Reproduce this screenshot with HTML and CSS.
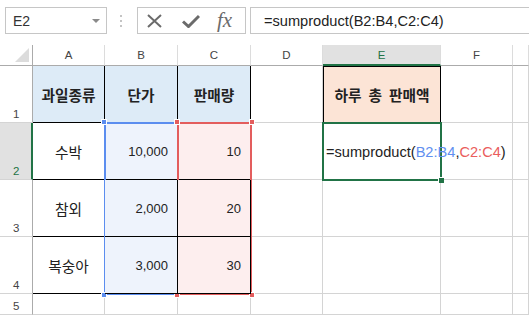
FILE: index.html
```html
<!DOCTYPE html>
<html lang="ko">
<head>
  <meta charset="UTF-8">
  <title>sumproduct</title>
  <link rel="stylesheet" href="styles.css">
</head>
<body>
  <div class="fbar">
    <div class="namebox"><span>E2</span><span class="caret"></span></div>
    <div class="grip"><i></i><i></i><i></i></div>
    <div class="fbtns">
      <svg class="ic-x" width="15" height="14" viewBox="0 0 15 14"><path d="M1 1L14 13M14 1L1 13" stroke="#6b6b6b" stroke-width="2" fill="none"/></svg>
      <svg class="ic-ok" width="18" height="14" viewBox="0 0 18 14"><path d="M1 7.5L6.5 12.5L17 2" stroke="#6b6b6b" stroke-width="3" fill="none"/></svg>
      <span class="fx">fx</span>
    </div>
    <div class="finput">=sumproduct(B2:B4,C2:C4)</div>
  </div>

  <div class="sheet">
    <div class="corner"></div>
    <div class="ch">A</div>
    <div class="ch">B</div>
    <div class="ch">C</div>
    <div class="ch">D</div>
    <div class="ch sel">E</div>
    <div class="ch">F</div>
    <div class="ch"></div>

    <div class="rh">1</div>
    <div class="cell hd">과일종류</div>
    <div class="cell hd">단가</div>
    <div class="cell hd">판매량</div>
    <div class="cell"></div>
    <div class="cell total">하루 총 판매액</div>
    <div class="cell"></div>
    <div class="cell"></div>

    <div class="rh sel">2</div>
    <div class="cell tb">수박</div>
    <div class="cell tb num fb">10,000
      <div class="range blue"><i class="h tl"></i><i class="h bl"></i></div>
    </div>
    <div class="cell tb num fc">10
      <div class="range red"><i class="h tl"></i><i class="h tr"></i><i class="h bl"></i><i class="h br"></i></div>
    </div>
    <div class="cell"></div>
    <div class="cell active">=sumproduct(<span class="rb">B2:B4</span>,<span class="rc">C2:C4</span>)<span class="cursor"></span></div>
    <div class="cell"></div>
    <div class="cell"></div>

    <div class="rh">3</div>
    <div class="cell tb">참외</div>
    <div class="cell tb num fb">2,000</div>
    <div class="cell tb num fc">20</div>
    <div class="cell"></div>
    <div class="cell"></div>
    <div class="cell"></div>
    <div class="cell"></div>

    <div class="rh">4</div>
    <div class="cell tb">복숭아</div>
    <div class="cell tb num fb">3,000</div>
    <div class="cell tb num fc">30</div>
    <div class="cell"></div>
    <div class="cell"></div>
    <div class="cell"></div>
    <div class="cell"></div>

    <div class="rh">5</div>
    <div class="cell"></div>
    <div class="cell"></div>
    <div class="cell"></div>
    <div class="cell"></div>
    <div class="cell"></div>
    <div class="cell"></div>
    <div class="cell"></div>
  </div>
</body>
</html>
```

FILE: styles.css
```css
body {
  margin: 0;
  width: 529px;
  height: 315px;
  overflow: hidden;
  background-color: #fff;
  color: #222;
  font-family: "Liberation Sans", "Noto Sans CJK KR", sans-serif;
}

/* formula bar */
.fbar {
  display: flex;
  align-items: center;
  height: 45px;
  padding: 7px 0 11px 5px;
  box-sizing: border-box;
}
.namebox {
  width: 102px;
  height: 27px;
  box-sizing: border-box;
  border: 1px solid #c6c6c6;
  display: flex;
  align-items: center;
  justify-content: space-between;
  padding: 0 6px 0 7px;
  font-size: 14px;
  color: #333;
}
.caret {
  border-left: 4px solid transparent;
  border-right: 4px solid transparent;
  border-top: 4px solid #8a8a8a;
}
.grip {
  display: flex;
  flex-direction: column;
  gap: 3px;
  margin: 0 15px 0 13px;
}
.grip i {
  width: 2px;
  height: 2px;
  background-color: #c4c4c4;
}
.fbtns {
  width: 109px;
  height: 27px;
  box-sizing: border-box;
  border: 1px solid #c6c6c6;
  display: flex;
  align-items: center;
  padding-left: 9px;
}
.ic-ok {
  margin-left: 20px;
}
.fx {
  margin-left: 17px;
  font-family: "Liberation Serif", serif;
  font-style: italic;
  font-size: 21px;
  color: #6b6b6b;
  line-height: 1;
}
.finput {
  flex: 1;
  height: 27px;
  box-sizing: border-box;
  margin-left: 4px;
  border: 1px solid #c6c6c6;
  border-right: none;
  display: flex;
  align-items: center;
  padding-left: 13px;
  font-size: 14.6px;
  color: #222;
}

/* sheet */
.sheet {
  display: grid;
  grid-template-columns: 33px 72px 73px 73px 72px 118px 72px 1fr;
  grid-template-rows: 21px repeat(4, 57px) 21px;
}
.corner {
  box-sizing: border-box;
  border-right: 1px solid #ababab;
  border-bottom: 1px solid #ababab;
  display: flex;
  justify-content: flex-end;
  align-items: flex-end;
  padding: 0 3px 3px 0;
}
.corner::after {
  content: "";
  border-left: 14px solid transparent;
  border-bottom: 14px solid #dcdcdc;
}
.ch {
  box-sizing: border-box;
  border-right: 1px solid #dcdcdc;
  border-bottom: 1px solid #ababab;
  display: flex;
  align-items: center;
  justify-content: center;
  font-size: 11.5px;
  color: #444;
}
.ch.sel {
  background-color: #e1e1e1;
  color: #217346;
  border-bottom: 2px solid #217346;
}
.rh {
  box-sizing: border-box;
  border-right: 1px solid #ababab;
  border-bottom: 1px solid #d4d4d4;
  display: flex;
  align-items: flex-end;
  padding: 0 0 2px 13px;
  font-size: 11.5px;
  color: #444;
}
.rh.sel {
  background-color: #e1e1e1;
  color: #217346;
  border-right: 2px solid #217346;
}
.cell {
  box-sizing: border-box;
  border-right: 1px solid #d4d4d4;
  border-bottom: 1px solid #d4d4d4;
  display: flex;
  align-items: center;
  justify-content: center;
  font-size: 14.7px;
  white-space: nowrap;
  min-width: 0;
}
.hd {
  background-color: #ddebf7;
  border-right-color: #000;
  border-bottom-color: #000;
  font-weight: bold;
}
.total {
  background-color: #fce4d6;
  border: 1px solid #000;
  font-weight: bold;
  word-spacing: 3px;
}
.tb {
  border-right-color: #000;
  border-bottom-color: #000;
}
.num {
  justify-content: flex-end;
  padding-right: 9px;
  font-size: 13px;
  position: relative;
}
.fb {
  background-color: #eef3fc;
}
.fc {
  background-color: #fdeeee;
}

/* reference ranges drawn over B2:B4 and C2:C4 */
.range {
  position: absolute;
  top: -1px;
  left: -1px;
  width: 75px;
  height: 173px;
  box-sizing: border-box;
  border: 2px solid;
  pointer-events: none;
}
.range.blue {
  border-color: #5b8def;
  color: #5b8def;
}
.range.red {
  border-color: #e35d5d;
  color: #e35d5d;
}
.h {
  position: absolute;
  width: 4px;
  height: 4px;
  background-color: currentColor;
  border: 1px solid #fff;
}
.h.tl { top: -5px; left: -5px; }
.h.tr { top: -5px; right: -5px; }
.h.bl { bottom: -5px; left: -5px; }
.h.br { bottom: -5px; right: -5px; }

/* active cell */
.active {
  margin: -1px;
  border: 2px solid #217346;
  justify-content: flex-start;
  padding-left: 2px;
  font-size: 14.6px;
  position: relative;
  z-index: 2;
}
.active::after {
  content: "";
  position: absolute;
  right: -4px;
  bottom: -4px;
  width: 5px;
  height: 5px;
  background-color: #217346;
  border-left: 1px solid #fff;
  border-top: 1px solid #fff;
}
.rb {
  color: #5f8ff0;
}
.rc {
  color: #ea5d5d;
}
.cursor {
  display: inline-block;
  width: 1px;
  height: 16px;
  margin-left: 2px;
  background-color: #333;
}
```
